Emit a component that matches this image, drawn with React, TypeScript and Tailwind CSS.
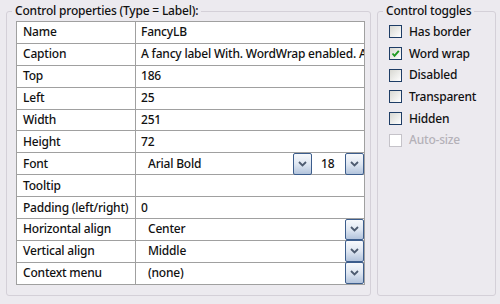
import React from 'react';

type Row = { label: string; value: string; kind?: 'text' | 'select' | 'font' };

const rows: Row[] = [
	{ label: 'Name', value: 'FancyLB' },
	{ label: 'Caption', value: 'A fancy label With. WordWrap enabled. An' },
	{ label: 'Top', value: '186' },
	{ label: 'Left', value: '25' },
	{ label: 'Width', value: '251' },
	{ label: 'Height', value: '72' },
	{ label: 'Font', value: 'Arial Bold', kind: 'font' },
	{ label: 'Tooltip', value: '' },
	{ label: 'Padding (left/right)', value: '0' },
	{ label: 'Horizontal align', value: 'Center', kind: 'select' },
	{ label: 'Vertical align', value: 'Middle', kind: 'select' },
	{ label: 'Context menu', value: '(none)', kind: 'select' },
];

const toggles = [
	{ label: 'Has border', checked: false },
	{ label: 'Word wrap', checked: true },
	{ label: 'Disabled', checked: false },
	{ label: 'Transparent', checked: false },
	{ label: 'Hidden', checked: false },
	{ label: 'Auto-size', checked: false, disabled: true },
];

/**
 * The little blue arrow button of a combo box.
 */
const DropButton = () => (
	<div className="flex h-full w-[19px] shrink-0 items-center justify-center rounded-[2px] border border-[#3c5d8c] bg-gradient-to-b from-[#f7f9fc] via-[#dfe7f2] to-[#b3c4dc]">
		<svg width="9" height="6" viewBox="0 0 9 6">
			<polyline points="1,1 4.5,4.5 8,1" fill="none" stroke="#4d5b70" strokeWidth="1.8" />
		</svg>
	</div>
);

/**
 * A checkbox in the toggles box.
 */
const Check = ({ checked, disabled }: { checked: boolean; disabled?: boolean }) => (
	<div
		className={
			disabled
				? 'flex h-[13px] w-[13px] shrink-0 items-center justify-center border border-[#c5c3c9] bg-white'
				: 'flex h-[13px] w-[13px] shrink-0 items-center justify-center border border-[#1e3d66] bg-gradient-to-br from-[#d8d8d2] to-white'
		}
	>
		{checked && (
			<svg width="9" height="9" viewBox="0 0 9 9">
				<polyline points="1.5,4.5 3.5,6.8 7.8,1.8" fill="none" stroke="#1f9a22" strokeWidth="1.9" />
			</svg>
		)}
	</div>
);

const App = () => {
	return (
		<div
			className="flex h-[304px] w-[500px] gap-[6px] bg-[#eceaef] pl-[6px] pt-[3px] text-[12px] font-[500] tracking-[-0.2px] text-[#111]"
			style={{ fontFamily: '"Noto Sans", "Open Sans", sans-serif' }}
		>
			<fieldset className="h-[293px] w-[365px] min-w-0 shrink-0 rounded-[3px] border border-[#d4d0d8] pl-[9px] pr-[5px]">
				<legend className="-ml-[4px] whitespace-nowrap px-[3px] leading-[16px]">Control properties (Type = Label):</legend>
				<div className="mt-[2px] border-x border-t border-[#a0a0a0] bg-white">
					{rows.map((row) => (
						<div key={row.label} className="flex h-[21.9px] border-b border-[#a0a0a0]">
							<div className="flex w-[119px] shrink-0 items-center border-r border-[#a0a0a0] pl-[6px]">{row.label}</div>
							{row.kind === 'select' && (
								<div className="flex min-w-0 flex-1 items-center">
									<div className="flex-1 pl-[12px]">{row.value}</div>
									<div className="-my-px h-[calc(100%+1px)]">
										<DropButton />
									</div>
								</div>
							)}
							{row.kind === 'font' && (
								<div className="flex min-w-0 flex-1 items-center">
									<div className="flex-1 pl-[12px]">{row.value}</div>
									<div className="-my-px h-[calc(100%+1px)]">
										<DropButton />
									</div>
									<div className="w-[33px] pl-[9px]">18</div>
									<div className="-my-px h-[calc(100%+1px)]">
										<DropButton />
									</div>
								</div>
							)}
							{!row.kind && (
								<div className="flex min-w-0 flex-1 items-center overflow-hidden whitespace-nowrap pl-[5px]">
									{row.value}
								</div>
							)}
						</div>
					))}
				</div>
			</fieldset>

			<fieldset className="h-[293px] w-[119px] min-w-0 shrink-0 rounded-[3px] border border-[#d4d0d8] pl-[11px]">
				<legend className="-ml-[6px] whitespace-nowrap px-[3px] leading-[16px]">Control toggles</legend>
				<div className="mt-[2px] flex flex-col">
					{toggles.map((t) => (
						<div key={t.label} className="flex h-[21.7px] items-center gap-[7px] whitespace-nowrap">
							<Check checked={t.checked} disabled={t.disabled} />
							<span className={t.disabled ? 'text-[#b4b1b8]' : ''}>{t.label}</span>
						</div>
					))}
				</div>
			</fieldset>
		</div>
	);
};

export default App;
